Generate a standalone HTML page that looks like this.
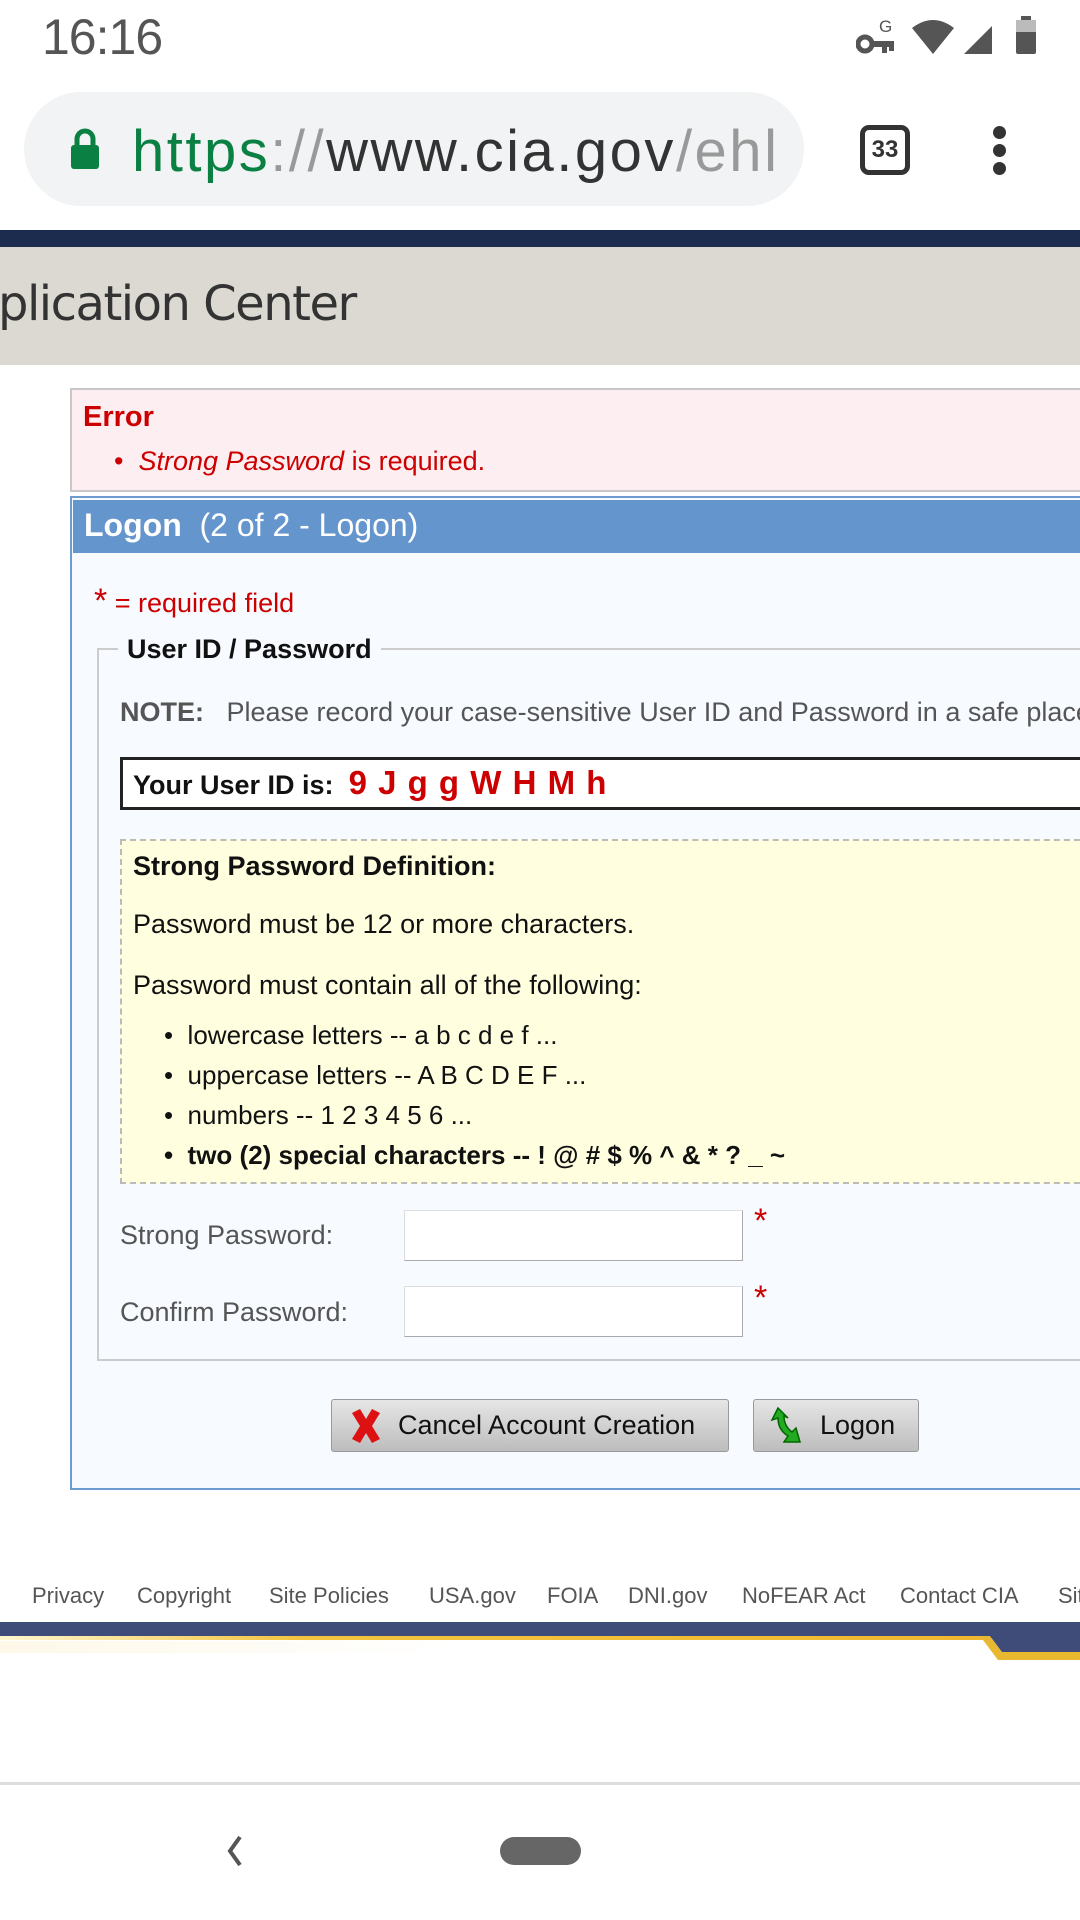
<!DOCTYPE html>
<html><head><meta charset="utf-8">
<style>
*{margin:0;padding:0;box-sizing:border-box}
body{width:1080px;height:1920px;position:relative;overflow:hidden;background:#fff;font-family:"Liberation Sans",sans-serif;}
.a{position:absolute;white-space:nowrap}
</style></head><body>
<div class="a" style="left:42px;top:8px;font-size:50px;color:#555;letter-spacing:-1px">16:16</div>
<svg class="a" style="left:856px;top:14px" width="190" height="44" viewBox="0 0 190 44">
 <circle cx="9" cy="30" r="7" fill="none" stroke="#555" stroke-width="5"/>
 <rect x="14" y="27" width="24" height="6" fill="#555"/><rect x="26" y="27" width="5" height="12" fill="#555"/><rect x="33" y="27" width="5" height="10" fill="#555"/>
 <text x="23" y="18" font-size="17" fill="#555" font-family="Liberation Sans">G</text>
 <path d="M56 14 Q77 -2 98 14 L77 40 Z" fill="#555"/>
 <path d="M136 12 L136 40 L108 40 Z" fill="#555"/>
 <rect x="160" y="6" width="20" height="34" rx="2" fill="#555"/><rect x="165" y="2" width="10" height="5" fill="#555"/>
 <rect x="160" y="6" width="20" height="12" fill="#bbb"/>
</svg>
<div class="a" style="left:24px;top:92px;width:780px;height:114px;border-radius:57px;background:#f1f3f4"></div>
<svg class="a" style="left:70px;top:128px" width="30" height="42" viewBox="0 0 30 42"><path d="M7 18 V11 a8 8 0 0 1 16 0 V18" fill="none" stroke="#0b8043" stroke-width="5"/><rect x="1" y="17" width="28" height="24" rx="3" fill="#0b8043"/></svg>
<div class="a" style="left:132px;top:117px;font-size:58px;letter-spacing:2.5px;color:#333;line-height:70px;width:645px;overflow:hidden"><span style="color:#0b8043">https</span><span style="color:#999">://</span>www.cia.gov<span style="color:#999">/ehl/</span></div>
<div class="a" style="left:860px;top:125px;width:50px;height:50px;border:5px solid #333;border-radius:9px;font-size:24px;font-weight:bold;text-align:center;line-height:40px;color:#333">33</div>
<div class="a" style="left:993px;top:126px;width:13px;height:13px;border-radius:50%;background:#333"></div>
<div class="a" style="left:993px;top:144px;width:13px;height:13px;border-radius:50%;background:#333"></div>
<div class="a" style="left:993px;top:162px;width:13px;height:13px;border-radius:50%;background:#333"></div>
<div class="a" style="left:0;top:230px;width:1080px;height:17px;background:#1b2c4f"></div>
<div class="a" style="left:0;top:247px;width:1080px;height:118px;background:#dcd9d3"></div>
<div class="a" style="left:-2px;top:276px;font-size:48px;color:#333;font-family:'DejaVu Sans',sans-serif;letter-spacing:-1.5px">plication Center</div>
<div class="a" style="left:70px;top:388px;width:1030px;height:104px;background:#fdeef1;border:2px solid #c8c8c8"></div>
<div class="a" style="left:83px;top:401px;font-size:29px;font-weight:bold;color:#c00">Error</div>
<div class="a" style="left:114px;top:446px;font-size:27px;color:#c00">•&nbsp; <i>Strong Password</i> is required.</div>
<div class="a" style="left:70px;top:496px;width:1030px;height:994px;background:#f7fbff;border:2px solid #6d9bd0"></div>
<div class="a" style="left:73px;top:500px;width:1010px;height:53px;background:#6495cc"></div>
<div class="a" style="left:84px;top:507px;font-size:32px;color:#fff"><b>Logon</b>&nbsp; (2 of 2 - Logon)</div>
<div class="a" style="left:94px;top:582px;font-size:27px;color:#c00"><span style="font-size:34px">*</span> = required field</div>
<div class="a" style="left:97px;top:648px;width:1000px;height:713px;border:2px solid #ccc"></div>
<div class="a" style="left:118px;top:630px;padding:0 9px;background:#f7fbff;font-size:27px;font-weight:bold;color:#111;line-height:38px">User ID / Password</div>
<div class="a" style="left:120px;top:697px;font-size:27px;color:#555"><b>NOTE:</b>&nbsp;&nbsp; Please record your case-sensitive User ID and Password in a safe place</div>
<div class="a" style="left:120px;top:757px;width:980px;height:53px;border:3px solid #222;background:#fff"></div>
<div class="a" style="left:133px;top:765px;font-size:27px;font-weight:bold;color:#111;line-height:36px">Your User ID is:&nbsp; <span style="color:#c00;font-size:33px;letter-spacing:1px">9 J g g W H M h</span></div>
<div class="a" style="left:120px;top:839px;width:980px;height:345px;background:#ffffe0;border:2px dashed #bbb"></div>
<div class="a" style="left:133px;top:851px;font-size:27px;font-weight:bold;color:#111">Strong Password Definition:</div>
<div class="a" style="left:133px;top:909px;font-size:27px;color:#111">Password must be 12 or more characters.</div>
<div class="a" style="left:133px;top:970px;font-size:27px;color:#111">Password must contain all of the following:</div>
<div class="a" style="left:164px;top:1015px;font-size:26px;color:#111;line-height:40px">
• &nbsp;lowercase letters -- a b c d e f ...<br>
• &nbsp;uppercase letters -- A B C D E F ...<br>
• &nbsp;numbers -- 1 2 3 4 5 6 ...<br>
<b>• &nbsp;two (2) special characters -- ! @ # $ % ^ &amp; * ? _ ~</b></div>
<div class="a" style="left:120px;top:1220px;font-size:27px;color:#555">Strong Password:</div>
<div class="a" style="left:404px;top:1210px;width:339px;height:51px;background:#fff;border:1px solid #aaa;border-top-color:#ddd;border-left-color:#ddd"></div>
<div class="a" style="left:754px;top:1202px;font-size:34px;color:#c00">*</div>
<div class="a" style="left:120px;top:1297px;font-size:27px;color:#555">Confirm Password:</div>
<div class="a" style="left:404px;top:1286px;width:339px;height:51px;background:#fff;border:1px solid #aaa;border-top-color:#ddd;border-left-color:#ddd"></div>
<div class="a" style="left:754px;top:1279px;font-size:34px;color:#c00">*</div>
<div class="a" style="left:331px;top:1399px;width:398px;height:53px;border:1px solid #999;border-radius:3px;background:linear-gradient(#e6e6e6,#bdbdbd);font-size:27px;color:#111;line-height:51px;padding-left:66px">Cancel Account Creation</div>
<svg class="a" style="left:348px;top:1407px" width="36" height="38" viewBox="0 0 36 38"><path d="M4 6 L12 2 L18 12 L24 2 L32 6 L24 19 L32 32 L24 36 L18 26 L12 36 L4 32 L12 19 Z" fill="#d11"/></svg>
<div class="a" style="left:753px;top:1399px;width:166px;height:53px;border:1px solid #999;border-radius:3px;background:linear-gradient(#e6e6e6,#bdbdbd);font-size:27px;color:#111;line-height:51px;padding-left:66px">Logon</div>
<svg class="a" style="left:768px;top:1406px" width="36" height="40" viewBox="0 0 36 40"><path d="M10 2 L4 14 L10 12 Q10 24 20 30 L16 36 L32 36 L28 22 L24 26 Q16 20 16 10 L20 12 Z" fill="#2a2" stroke="#060" stroke-width="1.5"/></svg>
<div class="a" style="left:32px;top:1583px;font-size:22px;color:#555">
<span class="a" style="left:0">Privacy</span><span class="a" style="left:105px">Copyright</span><span class="a" style="left:237px">Site Policies</span><span class="a" style="left:397px">USA.gov</span><span class="a" style="left:515px">FOIA</span><span class="a" style="left:596px">DNI.gov</span><span class="a" style="left:710px">NoFEAR Act</span><span class="a" style="left:868px">Contact CIA</span><span class="a" style="left:1026px">Site</span></div>
<div class="a" style="left:0;top:1622px;width:1080px;height:16px;background:#3f4c7a"></div>
<div class="a" style="left:0;top:1636px;width:990px;height:4px;background:linear-gradient(90deg,#fff6d0,#f3c440 30%,#f0b830)"></div>
<svg class="a" style="left:980px;top:1636px" width="100" height="24" viewBox="0 0 100 24"><path d="M0 0 L10 0 L22 16 L100 16 L100 24 L18 24 Z" fill="#e8b830"/><path d="M10 0 L100 0 L100 16 L22 16 Z" fill="#3f4c7a"/></svg>
<div class="a" style="left:0;top:1641px;width:450px;height:12px;background:linear-gradient(90deg,#fdf8e8,#fff)"></div>
<div class="a" style="left:0;top:1782px;width:1080px;height:3px;background:#ddd"></div>
<svg class="a" style="left:222px;top:1834px" width="24" height="34" viewBox="0 0 24 34"><path d="M18 3 L8 17 L18 31" fill="none" stroke="#555" stroke-width="4"/></svg>
<div class="a" style="left:500px;top:1837px;width:81px;height:28px;border-radius:14px;background:#666"></div>
</body></html>
